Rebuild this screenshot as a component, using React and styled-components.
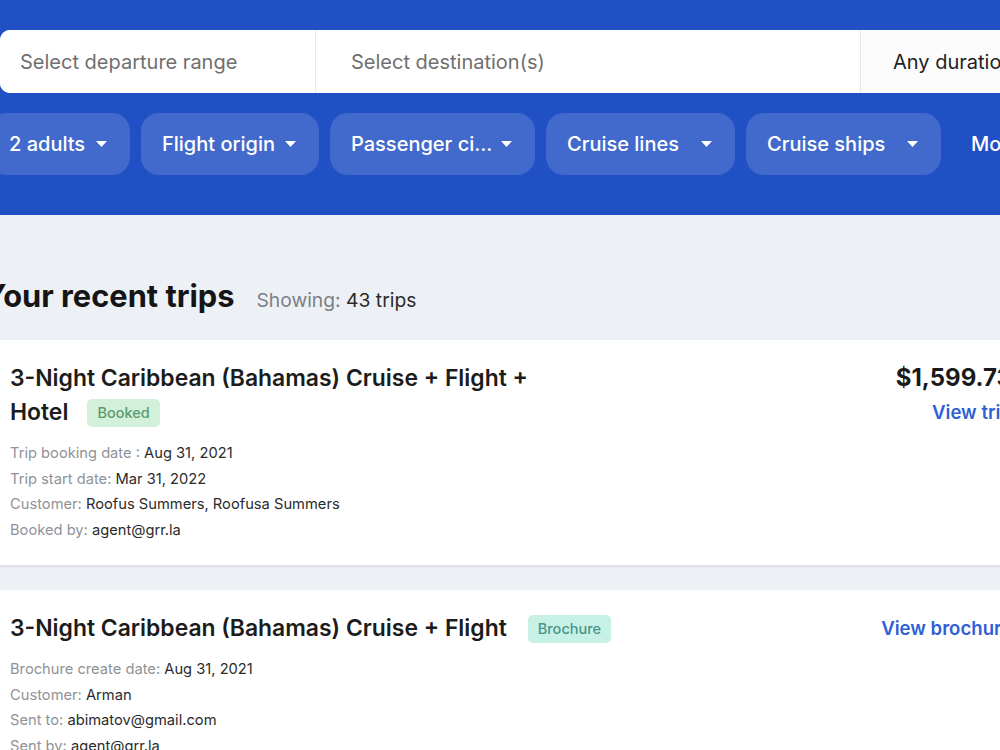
import React from 'react';
import styled, { createGlobalStyle } from 'styled-components';

const GlobalStyle = createGlobalStyle`
  html, body {
    margin: 0;
    padding: 0;
    background: #edf1f5;
    overflow: hidden;
  }
  body {
    font-family: Inter, "Noto Sans", sans-serif;
    -webkit-font-smoothing: antialiased;
  }
`;

const Header = styled.header`
  background-color: #2150c4;
  height: 215px;
  padding-top: 30px;
  box-sizing: border-box;
`;

const SearchBar = styled.div`
  display: flex;
  height: 63px;
  width: 1100px;
  background: #fff;
  border-radius: 10px 0 0 10px;
  overflow: hidden;
`;

const SearchField = styled.div`
  width: ${props => props.$width}px;
  flex-shrink: 0;
  display: flex;
  align-items: center;
  padding-left: ${props => props.$pad}px;
  box-sizing: border-box;
  font-size: 20px;
  color: ${props => (props.$filled ? '#222' : '#6f6f6f')};
  background: ${props => (props.$muted ? '#fcfcfc' : '#fff')};
  border-left: ${props => (props.$divider ? '1px solid #e6e8ec' : 'none')};
`;

const FilterRow = styled.div`
  display: flex;
  align-items: center;
  gap: 11px;
  margin-top: 20px;
  margin-left: -12px;
`;

const FilterPill = styled.button`
  width: ${props => props.$width}px;
  height: 62px;
  flex-shrink: 0;
  display: flex;
  align-items: center;
  justify-content: space-between;
  padding: 0 23px 0 21px;
  box-sizing: border-box;
  border: none;
  border-radius: 18px;
  background: rgba(255, 255, 255, 0.15);
  color: #fff;
  font-family: inherit;
  font-size: 20px;
  font-weight: 500;
`;

const MoreLink = styled.span`
  margin-left: 19px;
  color: #fff;
  font-size: 20px;
  font-weight: 500;
  white-space: nowrap;
`;

const Content = styled.main`
  width: 1042px;
  margin-left: -10px;
`;

const HeadingRow = styled.div`
  display: flex;
  align-items: baseline;
  gap: 22px;
  height: 125px;
  padding-top: 62px;
  box-sizing: border-box;
  margin-left: -6px;
`;

const Heading = styled.h1`
  margin: 0;
  font-size: 30.8px;
  font-weight: 700;
  color: #151515;
`;

const Showing = styled.span`
  font-size: 19.3px;
  color: #7b7f86;
  span {
    color: #2a2a2a;
  }
`;

const TripCard = styled.article`
  display: flex;
  justify-content: space-between;
  background: #fff;
  padding: 21px 20px;
  margin-bottom: 25px;
  box-shadow: 0 2px 3px rgba(0, 0, 0, 0.08);
`;

const TripInfo = styled.div`
  width: 640px;
`;

const TripTitle = styled.h2`
  margin: 0;
  max-width: ${props => props.$maxWidth || 640}px;
  font-size: 22.9px;
  font-weight: 600;
  line-height: 34px;
  color: #1c1c1c;
`;

const Badge = styled.span`
  display: inline-block;
  vertical-align: 2px;
  margin-left: ${props => props.$gap}px;
  padding: 0 10px;
  height: 28px;
  line-height: 28px;
  border-radius: 5px;
  font-size: 14.5px;
  font-weight: 500;
  background: ${props => (props.$kind === 'booked' ? '#d3f0db' : '#c8f1e6')};
  color: ${props => (props.$kind === 'booked' ? '#5c9a6b' : '#4a9486')};
`;

const Details = styled.div`
  margin-top: 12px;
`;

const DetailLine = styled.div`
  font-size: 14.7px;
  line-height: 25.7px;
  color: #2b2b2b;
`;

const Label = styled.span`
  color: #8f9297;
`;

const TripSide = styled.div`
  display: flex;
  flex-direction: column;
  align-items: flex-end;
`;

const Price = styled.div`
  font-size: 24px;
  font-weight: 700;
  line-height: 34px;
  color: #1a1a1a;
`;

const ViewLink = styled.a`
  font-size: 18.6px;
  font-weight: 600;
  line-height: 34px;
  color: #2f5fd6;
  text-decoration: none;
`;

const Caret = () => (
  <svg width="11" height="6" viewBox="0 0 11 6">
    <path d="M0 0 H11 L5.5 6 Z" fill="#fff" />
  </svg>
);

const filters = [
  { label: '2 adults', width: 142 },
  { label: 'Flight origin', width: 178 },
  { label: 'Passenger ci...', width: 205 },
  { label: 'Cruise lines', width: 189 },
  { label: 'Cruise ships', width: 195 },
];

const App = () => {
  return (
    <>
      <GlobalStyle />
      <Header>
        <SearchBar>
          <SearchField $width={315} $pad={20}>Select departure range</SearchField>
          <SearchField $width={545} $pad={35} $divider>Select destination(s)</SearchField>
          <SearchField $width={240} $pad={32} $filled $muted $divider>Any duration</SearchField>
        </SearchBar>
        <FilterRow>
          {filters.map(f => (
            <FilterPill key={f.label} $width={f.width}>
              {f.label}
              <Caret />
            </FilterPill>
          ))}
          <MoreLink>More filters</MoreLink>
        </FilterRow>
      </Header>

      <Content>
        <HeadingRow>
          <Heading>Your recent trips</Heading>
          <Showing>Showing: <span>43 trips</span></Showing>
        </HeadingRow>

        <TripCard>
          <TripInfo>
            <TripTitle $maxWidth={545}>
              3-Night Caribbean (Bahamas) Cruise + Flight + Hotel
              <Badge $kind="booked" $gap={19}>Booked</Badge>
            </TripTitle>
            <Details>
              <DetailLine><Label>Trip booking date : </Label>Aug 31, 2021</DetailLine>
              <DetailLine><Label>Trip start date: </Label>Mar 31, 2022</DetailLine>
              <DetailLine><Label>Customer: </Label>Roofus Summers, Roofusa Summers</DetailLine>
              <DetailLine><Label>Booked by: </Label>agent@grr.la</DetailLine>
            </Details>
          </TripInfo>
          <TripSide>
            <Price>$1,599.73</Price>
            <ViewLink href="#">View trip</ViewLink>
          </TripSide>
        </TripCard>

        <TripCard>
          <TripInfo>
            <TripTitle>
              3-Night Caribbean (Bahamas) Cruise + Flight
              <Badge $kind="brochure" $gap={21}>Brochure</Badge>
            </TripTitle>
            <Details>
              <DetailLine><Label>Brochure create date: </Label>Aug 31, 2021</DetailLine>
              <DetailLine><Label>Customer: </Label>Arman</DetailLine>
              <DetailLine><Label>Sent to: </Label>abimatov@gmail.com</DetailLine>
              <DetailLine><Label>Sent by: </Label>agent@grr.la</DetailLine>
            </Details>
          </TripInfo>
          <TripSide>
            <ViewLink href="#">View brochure</ViewLink>
          </TripSide>
        </TripCard>
      </Content>
    </>
  );
};

export default App;
